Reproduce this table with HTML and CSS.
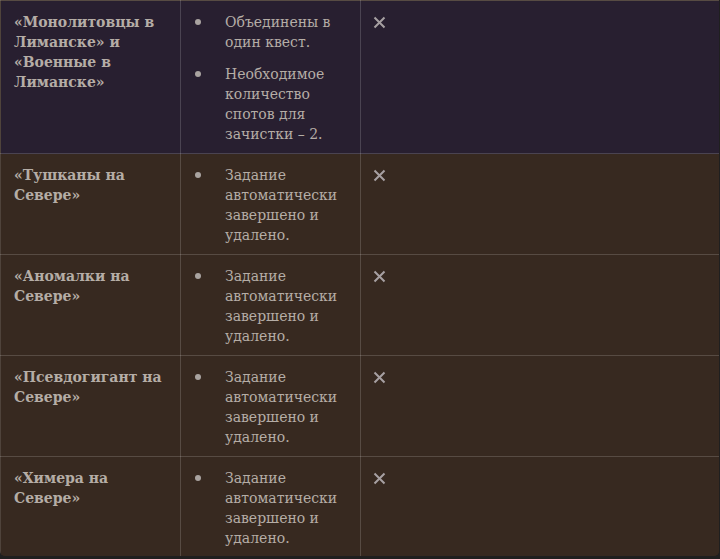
FILE: index.html
```html
<!DOCTYPE html>
<html lang="ru">

<head>
    <meta charset="UTF-8">
    <meta name="viewport" content="width=device-width, initial-scale=1.0">
    <title>Задания</title>
    <link rel="stylesheet" href="styles.css">
</head>

<body>
    <div class="wrap">
        <table class="quests">
            <tr class="merged">
                <td class="name">«Монолитовцы в Лиманске» и «Военные в Лиманске»</td>
                <td class="info">
                    <ul>
                        <li>Объединены в один квест.</li>
                        <li>Необходимое количество спотов для зачистки – 2.</li>
                    </ul>
                </td>
                <td class="mark"><svg width="13" height="13" viewBox="0 0 13 13"><path d="M1.5 1.5L11.5 11.5M11.5 1.5L1.5 11.5" /></svg></td>
            </tr>
            <tr>
                <td class="name">«Тушканы на Севере»</td>
                <td class="info">
                    <ul>
                        <li>Задание автоматически завершено и удалено.</li>
                    </ul>
                </td>
                <td class="mark"><svg width="13" height="13" viewBox="0 0 13 13"><path d="M1.5 1.5L11.5 11.5M11.5 1.5L1.5 11.5" /></svg></td>
            </tr>
            <tr>
                <td class="name">«Аномалки на Севере»</td>
                <td class="info">
                    <ul>
                        <li>Задание автоматически завершено и удалено.</li>
                    </ul>
                </td>
                <td class="mark"><svg width="13" height="13" viewBox="0 0 13 13"><path d="M1.5 1.5L11.5 11.5M11.5 1.5L1.5 11.5" /></svg></td>
            </tr>
            <tr>
                <td class="name">«Псевдогигант на Севере»</td>
                <td class="info">
                    <ul>
                        <li>Задание автоматически завершено и удалено.</li>
                    </ul>
                </td>
                <td class="mark"><svg width="13" height="13" viewBox="0 0 13 13"><path d="M1.5 1.5L11.5 11.5M11.5 1.5L1.5 11.5" /></svg></td>
            </tr>
            <tr>
                <td class="name">«Химера на Севере»</td>
                <td class="info">
                    <ul>
                        <li>Задание автоматически завершено и удалено.</li>
                    </ul>
                </td>
                <td class="mark"><svg width="13" height="13" viewBox="0 0 13 13"><path d="M1.5 1.5L11.5 11.5M11.5 1.5L1.5 11.5" /></svg></td>
            </tr>
        </table>
    </div>
</body>

</html>
```

FILE: styles.css
```css
* {
    margin: 0;
    padding: 0;
    box-sizing: border-box;
}

body {
    background-color: #1f1f1f;
    font-family: "DejaVu Serif", "Liberation Serif", serif;
    font-size: 14px;
    line-height: 20px;
    color: #b5ada6;
}

.wrap {
    width: 719px;
    height: 556px;
    overflow: hidden;
    border-radius: 0 0 5px 5px;
    background-color: #372920;
}

.quests {
    width: 100%;
    border-collapse: collapse;
    table-layout: fixed;
}

.quests tr {
    background-color: #372920;
}

.quests tr.merged {
    background-color: #281f30;
}

.quests td {
    vertical-align: top;
    padding: 11px 14px 9px 13px;
    border: 1px solid rgba(255, 255, 255, 0.16);
}

.quests td:first-child {
    border-left: 1px solid rgba(255, 255, 255, 0.12);
}

.quests td:last-child {
    border-right: none;
}

.quests tr:last-child td {
    border-bottom: none;
}

.name {
    width: 180px;
    font-weight: bold;
}

.info {
    width: 180px;
}

.info ul {
    list-style: none;
}

.info li {
    display: flex;
}

.info li::before {
    content: "";
    flex-shrink: 0;
    width: 6px;
    height: 6px;
    margin: 7px 24px 0 1px;
    border-radius: 50%;
    background-color: #a9a3a0;
}

.info li + li {
    margin-top: 12px;
}

.quests td.mark {
    padding-left: 12px;
}

.mark svg {
    display: block;
    margin-top: 4px;
    stroke: #a7a0a2;
    stroke-width: 2;
    fill: none;
}
```
